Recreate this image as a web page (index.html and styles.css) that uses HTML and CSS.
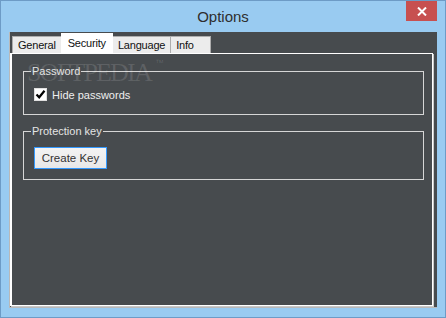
FILE: index.html
```html
<!DOCTYPE html>
<html lang="en">
<head>
    <meta charset="UTF-8">
    <title>Options</title>
    <link rel="stylesheet" href="styles.css">
</head>
<body>

<div class="window">
    <div class="titlebar">
        <span></span>
        <span class="title">Options</span>
        <button class="close" type="button">
            <svg width="10" height="9" viewBox="0 0 10 9"><path d="M1 0.5 L9 8.5 M9 0.5 L1 8.5" stroke="#fff" stroke-width="2"/></svg>
        </button>
    </div>

    <div class="client">
        <div class="tabs">
            <div class="tab">General</div>
            <div class="tab active">Security</div>
            <div class="tab">Language</div>
            <div class="tab info">Info</div>
        </div>

        <div class="tab-page">
            <fieldset class="group password">
                <legend>Password</legend>
                <label class="check">
                    <span class="box">
                        <svg width="11" height="11" viewBox="0 0 11 11"><path d="M1.5 5.5 L4.2 8.3 L9.5 1.8" fill="none" stroke="#000" stroke-width="2.2"/></svg>
                    </span>
                    Hide passwords
                </label>
            </fieldset>

            <fieldset class="group protection">
                <legend>Protection key</legend>
                <button class="btn" type="button">Create Key</button>
            </fieldset>
        </div>

        <div class="watermark">SOFTPEDIA<span class="tm">™</span></div>
    </div>
</div>

</body>
</html>
```

FILE: styles.css
```css
/* General Styles */
* {
    box-sizing: border-box;
}

body {
    margin: 0;
    font-family: "Liberation Sans", Arial, sans-serif;
    background: #99cbf1;
}

/* Window frame */
.window {
    width: 446px;
    height: 318px;
    background: #99cbf1;
    border: 1px solid #6d9bc6;
    overflow: hidden;
}

.titlebar {
    height: 31px;
    display: grid;
    grid-template-columns: 1fr auto 1fr;
    align-items: start;
}

.title {
    font-size: 15px;
    color: #2e2e2e;
    padding-top: 7px;
}

.close {
    justify-self: end;
    width: 31px;
    height: 20px;
    margin-right: 8px;
    border: none;
    padding: 0;
    background: #c75050;
    display: flex;
    align-items: center;
    justify-content: center;
}

/* Client area */
.client {
    position: relative;
    margin-left: 8px;
    width: 428px;
    height: 276px;
    background: #474b4e;
    border-left: 1px solid #b9b9b9;
    border-bottom: 1px solid #b9b9b9;
    padding: 1px 2px 1px 0;
}

.tabs {
    display: flex;
    align-items: flex-end;
    height: 20px;
    padding-left: 2px;
}

.tab {
    height: 17px;
    padding: 2px 5px 0 5px;
    font-size: 11px;
    letter-spacing: -0.2px;
    color: #111;
    background: #ececec;
    border: 1px solid #adadad;
    border-bottom: none;
    margin-right: -1px;
}

.tab.active {
    height: 20px;
    padding: 3px 6px 0 6px;
    background: #fff;
    border-color: #fff;
    position: relative;
    z-index: 1;
}

.tab.info {
    width: 41px;
}

.tab-page {
    height: 253px;
    margin-right: 2px;
    border: 1px solid #fff;
    border-left-width: 2px;
    box-shadow: 1px 1px 0 #c9c9c9;
    padding-top: 10px;
}

/* Group boxes */
.group {
    margin: 0 8px 0 11px;
    border: 1px solid #d6d6d6;
    padding: 0 10px 0 10px;
    color: #e4e4e4;
    font-size: 11px;
    min-width: 0;
}

.group legend {
    padding: 0 1px;
    margin-left: -3px;
    line-height: 14px;
}

.group.password {
    height: 51px;
    padding-top: 9px;
}

.group.protection {
    margin-top: 9px;
    height: 56px;
    padding-top: 9px;
}

.check {
    display: flex;
    align-items: center;
    gap: 5px;
    height: 15px;
    color: #eeeeee;
}

.box {
    width: 13px;
    height: 13px;
    background: #fff;
    border: 1px solid #e0e0e0;
    display: flex;
    align-items: center;
    justify-content: center;
}

.btn {
    width: 73px;
    height: 22px;
    padding: 0;
    font-family: inherit;
    font-size: 11.5px;
    color: #333;
    border: 1px solid #3399ff;
    background: linear-gradient(#f3f3f3, #e8e8e8);
}

/* Screenshot watermark */
.watermark {
    position: absolute;
    left: 17px;
    top: 26px;
    font-family: "Liberation Serif", serif;
    font-size: 26px;
    letter-spacing: -1.8px;
    color: rgba(255, 255, 255, 0.13);
    pointer-events: none;
}

.watermark .tm {
    font-family: "Liberation Sans", sans-serif;
    font-size: 9px;
    vertical-align: top;
    margin-left: 4px;
}
```
